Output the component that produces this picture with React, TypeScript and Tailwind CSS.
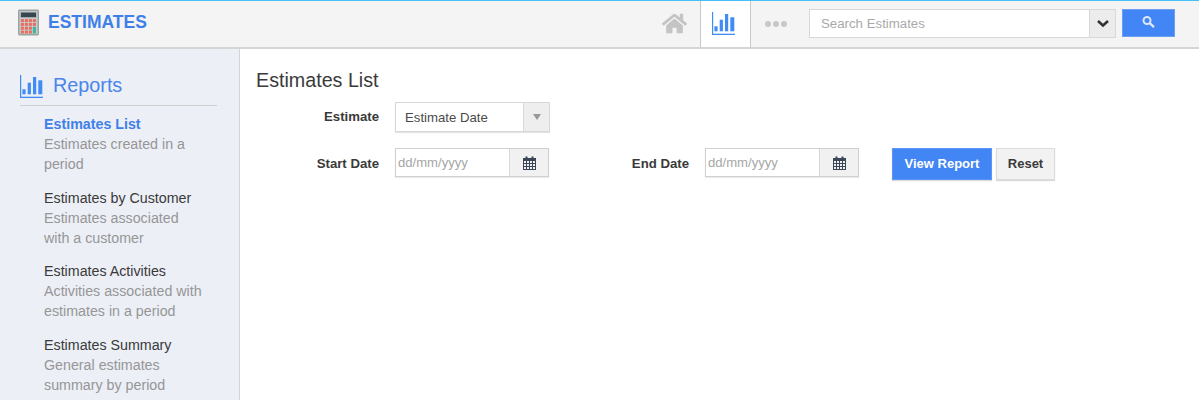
import { FaHome } from 'react-icons/fa';

function BarsIcon({ className }: { className: string }) {
  return (
    <svg className={className} viewBox="0 0 23 23" fill="currentColor">
      <rect x="0" y="0" width="1.2" height="23" />
      <rect x="0" y="21.7" width="23" height="1.3" />
      <rect x="2.4" y="14.3" width="3.2" height="5" />
      <rect x="7.7" y="7.7" width="3.2" height="11.6" />
      <rect x="13" y="2" width="3.2" height="17.3" />
      <rect x="18.3" y="5.3" width="4" height="14" />
    </svg>
  );
}

function CalendarIcon() {
  return (
    <svg className="w-[13px] h-[14px] text-[#3a4656]" viewBox="0 0 13 14" fill="currentColor">
      <path d="M0 2h2.5V0.5h2V2h4V0.5h2V2H13v12H0z M1 5v2h2V5z M4 5v2h2V5z M7 5v2h2V5z M10 5v2h2V5z M1 8v2h2V8z M4 8v2h2V8z M7 8v2h2V8z M10 8v2h2V8z M1 11v2h2v-2z M4 11v2h2v-2z M7 11v2h2v-2z M10 11v2h2v-2z" fillRule="evenodd" />
    </svg>
  );
}

function Calculator() {
  return (
    <svg className="w-[21px] h-[27px]" viewBox="0 0 22 27">
      <rect x="0" y="0" width="22" height="27" rx="1.5" fill="#9aa3a3" />
      <rect x="1.5" y="1.5" width="19" height="24" fill="#c4cbca" />
      <rect x="3" y="3" width="16" height="5" fill="#37474f" />
      {[10, 14, 18, 22].map((y) =>
        [3, 7.2, 11.4, 15.6].map((x) =>
          x === 15.6 && y >= 18 ? null : <rect key={`${x}-${y}`} x={x} y={y} width="3.2" height="3" fill="#ec6a5e" />,
        ),
      )}
      <rect x="15.6" y="18" width="3.2" height="7" fill="#3fb89a" />
    </svg>
  );
}

const reports = [
  { title: 'Estimates List', desc: ['Estimates created in a', 'period'], active: true },
  { title: 'Estimates by Customer', desc: ['Estimates associated', 'with a customer'] },
  { title: 'Estimates Activities', desc: ['Activities associated with', 'estimates in a period'] },
  { title: 'Estimates Summary', desc: ['General estimates', 'summary by period'] },
];

function DateField() {
  return (
    <div className="flex w-[154px] h-[29px] border border-[#d0d0d0] shadow-[0_1px_1px_rgba(0,0,0,0.08)]">
      <div className="w-[113px] pl-[2px] flex items-center text-[13.1px] text-[#a6a6a6] bg-white">dd/mm/yyyy</div>
      <div className="flex-1 flex items-center justify-center bg-[#f1f1f1] border-l border-[#d8d8d8]">
        <CalendarIcon />
      </div>
    </div>
  );
}

export default function App() {
  return (
    <div className="w-[1199px] h-[400px] overflow-hidden flex flex-col bg-white font-['Liberation_Sans',Arial,sans-serif] text-[#3a3a3a]">
      {/* Top bar */}
      <header className="h-[49px] shrink-0 flex bg-[#f4f4f4] border-t border-[#45c1f5] border-b-2 border-b-[#d4d4d4]">
        <div className="flex items-center pl-[18px] pb-[3px] gap-[9px]">
          <Calculator />
          <span className="text-[17.5px] font-bold text-[#3f80e8] leading-none">ESTIMATES</span>
        </div>
        <div className="ml-auto flex">
          <div className="w-[60px] flex items-center justify-center pl-[8px] pb-[2px]">
            <FaHome className="w-[25px] h-[25px] text-[#c4c4c4]" />
          </div>
          <div className="w-[51px] bg-white border-x border-[#c8c8c8] flex items-center justify-center pr-[5px] pb-[1px]">
            <BarsIcon className="w-[23px] h-[23px] text-[#3f8cf7]" />
          </div>
          <div className="w-[58px] flex items-center justify-center pr-[8px]">
            <svg className="w-[22px] h-[6px] text-[#c8c8c8]" viewBox="0 0 22 6" fill="currentColor">
              <circle cx="3" cy="3" r="3" />
              <circle cx="11" cy="3" r="3" />
              <circle cx="19" cy="3" r="3" />
            </svg>
          </div>
          <div className="flex items-start pt-[8px] pr-[24px]">
            <div className="flex w-[307px] h-[29px] border border-[#d8d8d8] mr-[6px]">
              <div className="flex-1 bg-white pl-[11px] pt-[1px] flex items-center text-[13.25px] text-[#a9a9a9]">Search Estimates</div>
              <div className="w-[26px] bg-[#ececec] border-l border-[#d8d8d8] flex items-center justify-center">
                <svg className="w-[12px] h-[9px] text-[#333]" viewBox="0 0 12 9" fill="none" stroke="currentColor" strokeWidth="2.6">
                  <path d="M1 2l5 4.5L11 2" />
                </svg>
              </div>
            </div>
            <div className="w-[53px] h-[28px] bg-[#4285f4] border border-[#6a9ff5] flex items-start justify-center pt-[6px]">
              <svg className="w-[13px] h-[12px] text-[#dbe7fc]" viewBox="0 0 13 12" fill="none" stroke="currentColor" strokeWidth="2">
                <circle cx="5" cy="4.5" r="3.5" />
                <path d="M7.8 7.2l4.2 4" strokeWidth="2.4" />
              </svg>
            </div>
          </div>
        </div>
      </header>

      <div className="flex flex-1 min-h-0">
        {/* Sidebar */}
        <aside className="w-[240px] shrink-0 bg-[#eceff6] border-r border-[#d4d4d4] pl-[20px] pr-[22px] pt-[20px]">
          <div className="flex items-center gap-[10px] pb-[4px] border-b border-[#cfcfcf] h-[32px] box-content">
            <BarsIcon className="w-[23px] h-[23px] text-[#3f8cf7] mt-[3px]" />
            <span className="text-[19.8px] text-[#4a85ea] pt-[2px]">Reports</span>
          </div>
          <ul className="pl-[24px] pt-[8px] flex flex-col gap-[13.67px]">
            {reports.map((r) => (
              <li key={r.title} className="text-[14.25px] leading-[20px]">
                <div className={r.active ? 'font-bold text-[#3f80e8]' : 'text-[#3a3a3a]'}>{r.title}</div>
                {r.desc.map((line) => (
                  <div key={line} className="text-[#969696] whitespace-nowrap">{line}</div>
                ))}
              </li>
            ))}
          </ul>
        </aside>

        {/* Main */}
        <main className="flex-1 pl-[16px] pt-[18px]">
          <h1 className="text-[19.7px] leading-[26px] text-[#3a3a3a]">Estimates List</h1>
          <div className="mt-[9px] flex items-center h-[30px]">
            <label className="w-[123px] text-right text-[13.2px] font-bold">Estimate</label>
            <div className="ml-[16px] flex w-[155px] h-[30px] border border-[#d8d8d8] shadow-[0_1px_1px_rgba(0,0,0,0.1)]">
              <div className="flex-1 bg-white pl-[9px] pt-[1px] flex items-center text-[13.2px] text-[#4a4a4a]">Estimate Date</div>
              <div className="w-[26px] bg-[#eeeeee] border-l border-[#d8d8d8] flex items-center justify-center">
                <span className="w-0 h-0 border-x-[4px] border-x-transparent border-t-[6px] border-t-[#999]" />
              </div>
            </div>
          </div>
          <div className="mt-[16px] flex items-center h-[32px]">
            <label className="w-[123px] text-right text-[13.2px] font-bold">Start Date</label>
            <div className="ml-[16px] self-start"><DateField /></div>
            <label className="w-[140px] text-right text-[13.2px] font-bold">End Date</label>
            <div className="ml-[16px] self-start"><DateField /></div>
            <button className="ml-[33px] w-[100px] h-[32px] bg-[#4285f4] border border-[#5b95f5] text-white text-[13px] font-bold shadow-[0_1px_1px_rgba(0,0,0,0.15)]">View Report</button>
            <button className="ml-[4px] w-[59px] h-[32px] bg-[#f2f2f2] border border-[#dcdcdc] text-[#3a3a3a] text-[13px] font-bold shadow-[0_1px_1px_rgba(0,0,0,0.15)]">Reset</button>
          </div>
        </main>
      </div>
    </div>
  );
}
